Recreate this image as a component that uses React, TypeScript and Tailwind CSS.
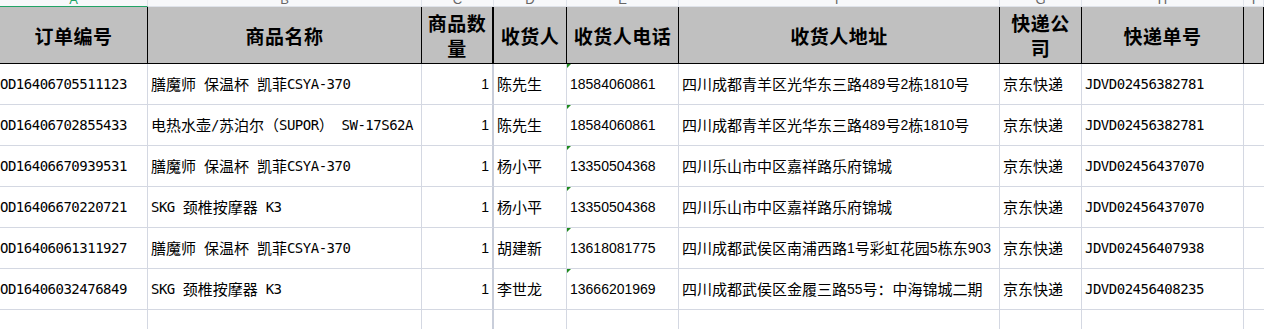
import React from 'react';

const cols = [
  { letter: 'A', title: '订单编号' },
  { letter: 'B', title: '商品名称' },
  { letter: 'C', title: '商品数\n量' },
  { letter: 'D', title: '收货人' },
  { letter: 'E', title: '收货人电话' },
  { letter: 'F', title: '收货人地址' },
  { letter: 'G', title: '快递公\n司' },
  { letter: 'H', title: '快递单号' },
  { letter: 'I', title: '' },
];

const rows = [
  ['OD16406705511123', '膳魔师 保温杯 凯菲CSYA-370', '1', '陈先生', '18584060861', '四川成都青羊区光华东三路489号2栋1810号', '京东快递', 'JDVD02456382781'],
  ['OD16406702855433', '电热水壶/苏泊尔（SUPOR） SW-17S62A', '1', '陈先生', '18584060861', '四川成都青羊区光华东三路489号2栋1810号', '京东快递', 'JDVD02456382781'],
  ['OD16406670939531', '膳魔师 保温杯 凯菲CSYA-370', '1', '杨小平', '13350504368', '四川乐山市中区嘉祥路乐府锦城', '京东快递', 'JDVD02456437070'],
  ['OD16406670220721', 'SKG 颈椎按摩器 K3', '1', '杨小平', '13350504368', '四川乐山市中区嘉祥路乐府锦城', '京东快递', 'JDVD02456437070'],
  ['OD16406061311927', '膳魔师 保温杯 凯菲CSYA-370', '1', '胡建新', '13618081775', '四川成都武侯区南浦西路1号彩虹花园5栋东903', '京东快递', 'JDVD02456407938'],
  ['OD16406032476849', 'SKG 颈椎按摩器 K3', '1', '李世龙', '13666201969', '四川成都武侯区金履三路55号：中海锦城二期', '京东快递', 'JDVD02456408235'],
  ['', '', '', '', '', '', '', ''],
];

const grid = 'grid grid-cols-[148px_274px_72px_73px_112px_321px_82px_162px_1fr]';

// ASCII runs get a narrow half-width font, CJK keeps the wide one
const Mixed: React.FC<{ text: string; sans?: boolean }> = ({ text, sans }) => (
  <>
    {text.split(/([\x20-\x7e]+)/).filter(Boolean).map((part, i) =>
      /^[\x20-\x7e]+$/.test(part) ? (
        <span
          key={i}
          className={sans ? 'text-[14px]' : 'text-[14px] tracking-[-0.5px]'}
          style={{ fontFamily: sans ? '"Liberation Sans", sans-serif' : '"DejaVu Sans Mono", monospace' }}
        >
          {part}
        </span>
      ) : (
        <span key={i}>{part}</span>
      )
    )}
  </>
);

const App: React.FC = () => {
  return (
    <div className="w-[1264px] h-[329px] overflow-hidden bg-white text-black" style={{ fontFamily: '"Noto Sans CJK SC", sans-serif' }}>
      {/* column letters, mostly scrolled out of view */}
      <div className={grid}>
        {cols.map((c, i) => (
          <div
            key={c.letter}
            className={`h-[7px] overflow-hidden flex items-end justify-center border-r border-r-[#dfe3ea] bg-[#f7f8fa] ${i === 0 ? 'border-b border-b-[#21a366]' : 'border-b border-b-[#dfe3ea]'}`}
          >
            <span className={`block leading-[12px] text-[13px] shrink-0 ${i === 0 ? 'text-[#21a366]' : 'text-[#666]'}`} style={{ fontFamily: '"Liberation Sans", sans-serif' }}>
              {c.letter}
            </span>
          </div>
        ))}
      </div>

      {/* header row */}
      <div className={grid}>
        {cols.map((c, i) => (
          <div
            key={c.letter}
            className={`h-[57px] bg-[#c0c0c0] border-b border-b-black flex items-center justify-center text-center whitespace-pre-line font-bold text-[19px] leading-[25px] tracking-[0.5px] ${i === 2 ? 'border-r-2 border-r-black' : 'border-r border-r-black'}`}
          >
            {c.title}
          </div>
        ))}
      </div>

      {/* data rows */}
      {rows.map((r, ri) => (
        <div key={ri} className={grid}>
          {r.map((v, ci) => (
            <div
              key={ci}
              className={`relative h-[41px] flex items-center whitespace-pre overflow-hidden text-[15px] border-b border-b-[#d4d8e2] ${ci === 2 ? 'border-r-2 border-r-[#c9ceda] justify-end pr-[3px]' : 'border-r border-r-[#d4d8e2]'} ${ci === 0 ? 'pl-0' : ci === 2 ? '' : 'pl-[3px]'}`}
            >
              {ci === 4 && v && (
                <span className="absolute -left-px top-0 w-0 h-0 border-t-[5px] border-t-[#1e8a1e] border-r-[5px] border-r-transparent" />
              )}
              {v && <Mixed text={v} sans={ci === 2 || ci === 4 || ci === 5} />}
            </div>
          ))}
          <div className="h-[41px] border-b border-b-[#d4d8e2]" />
        </div>
      ))}
    </div>
  );
};

export default App;
